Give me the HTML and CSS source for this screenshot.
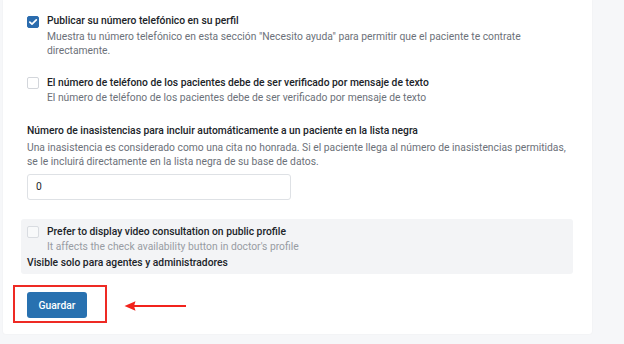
FILE: index.html
```html
<!DOCTYPE html>
<html lang="es">
<head>
<meta charset="utf-8">
<link rel="stylesheet" href="styles.css">
</head>
<body>
<div class="card">
  <div class="option">
    <span class="check checked">
      <svg width="12" height="12" viewBox="0 0 12 12"><path d="M2.8 6.1 L5 8.2 L9.3 3.9" fill="none" stroke="#fff" stroke-width="1.7" stroke-linecap="round" stroke-linejoin="round"/></svg>
    </span>
    <div class="option-text">
      <div class="title">Publicar su número telefónico en su perfil</div>
      <div class="desc">Muestra tu número telefónico en esta sección "Necesito ayuda" para permitir que el paciente te contrate directamente.</div>
    </div>
  </div>

  <div class="option second">
    <span class="check"></span>
    <div class="option-text">
      <div class="title">El número de teléfono de los pacientes debe de ser verificado por mensaje de texto</div>
      <div class="desc">El número de teléfono de los pacientes debe de ser verificado por mensaje de texto</div>
    </div>
  </div>

  <div class="field">
    <div class="title">Número de inasistencias para incluir automáticamente a un paciente en la lista negra</div>
    <div class="desc field-desc">Una inasistencia es considerado como una cita no honrada. Si el paciente llega al número de inasistencias permitidas, se le incluirá directamente en la lista negra de su base de datos.</div>
    <div class="input">0</div>
  </div>

  <div class="admin-box">
    <div class="option">
      <span class="check soft"></span>
      <div class="option-text">
        <div class="title">Prefer to display video consultation on public profile</div>
        <div class="desc light">It affects the check availability button in doctor's profile</div>
      </div>
    </div>
    <div class="title admin-note">Visible solo para agentes y administradores</div>
  </div>

  <div class="actions">
    <button class="btn">Guardar</button>
    <span class="highlight"></span>
    <svg class="arrow" width="64" height="12" viewBox="0 0 64 12"><line x1="9" y1="6" x2="62" y2="6" stroke="#f2231c" stroke-width="2"/><path d="M0.5 6 L11.5 1.3 L10 6 L11.5 10.7 Z" fill="#f2231c"/></svg>
  </div>
</div>
</body>
</html>
```

FILE: styles.css
```css
* { box-sizing: border-box; }
html, body { margin: 0; padding: 0; }
body {
  background: #f6f7f9;
  font-family: Roboto, "Noto Sans", sans-serif;
  color: #22262b;
  width: 624px;
  height: 344px;
  overflow: hidden;
}
.card {
  margin-left: 3px;
  width: 589px;
  height: 334px;
  background: #fff;
  border-radius: 0 0 3px 3px;
  box-shadow: 0 0 2px rgba(0, 0, 0, 0.05);
  padding: 14.25px 19px 0 24px;
}
.option {
  display: flex;
  align-items: flex-start;
  gap: 8px;
}
.option.second { margin-top: 17px; }
.check {
  flex: none;
  width: 12px;
  height: 12px;
  margin-top: 1.25px;
  border: 1px solid #d3d6db;
  border-radius: 2px;
  background: #fff;
  display: flex;
}
.check.checked {
  background: #2b6cae;
  border-color: #2b6cae;
}
.check.checked svg { margin: -1px; }
.check.soft { border-color: #d9dce1; background: #f8f9fa; }
.option-text { flex: 1; min-width: 0; }
.title {
  font-size: 10.3px;
  font-weight: 500;
  line-height: 14.5px;
  color: #202328;
}
.desc {
  font-size: 10.3px;
  line-height: 14.5px;
  color: #6c7179;
  margin-top: 1px;
}
.desc.light { color: #989ca3; margin-top: 0; }
.field { margin-top: 18px; }
.field-desc { margin-top: 2.5px; }
.input {
  margin-top: 4.5px;
  width: 264px;
  height: 26px;
  border: 1px solid #dee1e5;
  border-radius: 3px;
  padding-left: 8px;
  font-size: 10.3px;
  line-height: 24px;
  color: #22262b;
}
.admin-box {
  margin: 18.75px 0 0 -6.5px;
  height: 55px;
  background: #f3f4f6;
  border-radius: 3px;
  padding: 6px 6.5px 0 6.5px;
}
.admin-note { margin-top: 1.5px; }
.actions {
  position: relative;
  margin-top: 18.3px;
  display: flex;
  align-items: center;
}
.btn {
  width: 60px;
  height: 25.5px;
  background: #2871b0;
  color: #fff;
  border: none;
  border-radius: 3px;
  font-family: Roboto, sans-serif;
  font-size: 10.3px;
  font-weight: 500;
  padding: 0;
}
.highlight {
  position: absolute;
  left: -14.5px;
  top: -7px;
  width: 94.5px;
  height: 37.5px;
  border: 2px solid #ee2a24;
}
.arrow {
  position: absolute;
  left: 96.5px;
  top: 7.5px;
}
```
